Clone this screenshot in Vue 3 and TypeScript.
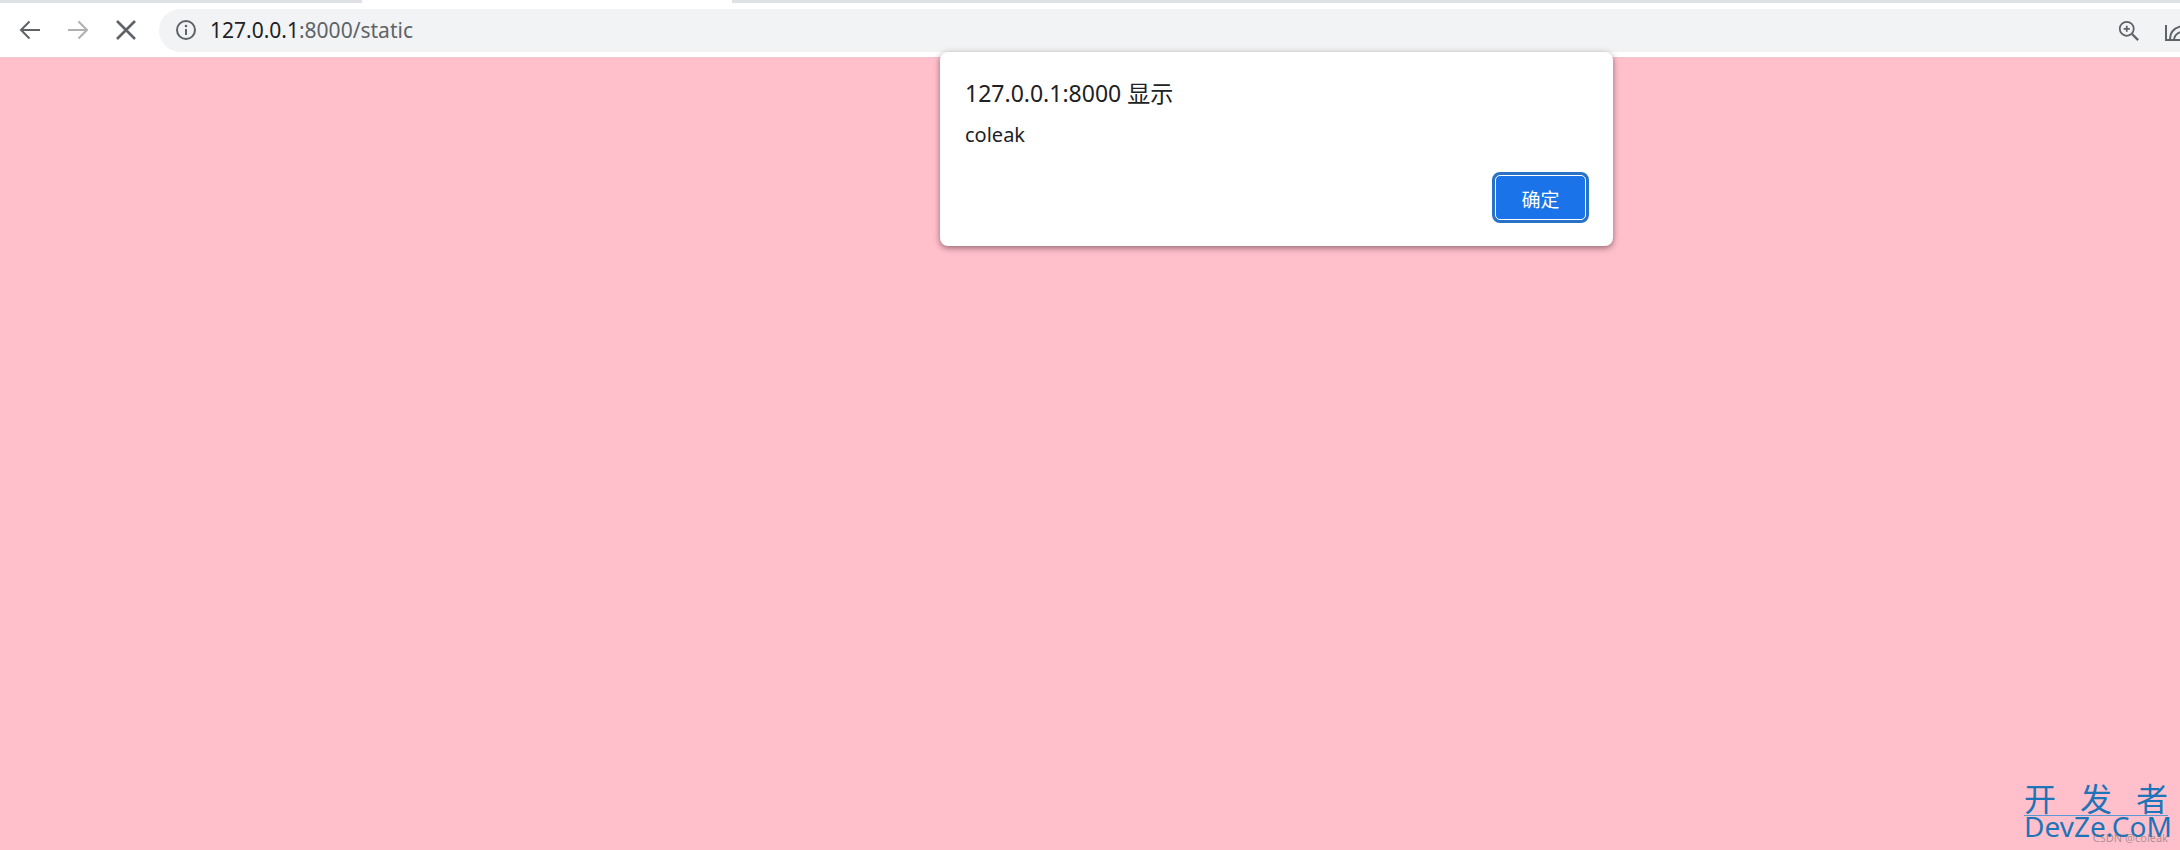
<template>
  <div class="page">
    <div class="tabstrip">
      <div class="tab-rest tab-left"></div>
      <div class="tab-active"></div>
      <div class="tab-rest tab-right"></div>
    </div>
    <header class="toolbar">
      <button class="nav-btn" aria-label="back">
        <svg width="24" height="24" viewBox="0 0 24 24"><path d="M22 12H3M11.5 3.5 3 12l8.5 8.5" class="stroke" /></svg>
      </button>
      <button class="nav-btn nav-off" aria-label="forward">
        <svg width="24" height="24" viewBox="0 0 24 24"><path d="M2 12h19M12.5 3.5 21 12l-8.5 8.5" class="stroke" /></svg>
      </button>
      <button class="nav-btn" aria-label="stop">
        <svg width="24" height="24" viewBox="0 0 24 24"><path d="M3 3l18 18M21 3 3 21" class="stroke thick" /></svg>
      </button>
      <div class="omnibox">
        <svg class="info" width="22" height="22" viewBox="0 0 22 22">
          <circle cx="11" cy="11" r="9" class="stroke" />
          <path d="M11 10v6" class="stroke" />
          <circle cx="11" cy="7" r="1.3" fill="#5f6368" />
        </svg>
        <span class="url"><span class="host">127.0.0.1</span>:8000/static</span>
        <div class="spacer"></div>
        <svg class="zoom-icon" width="21" height="21" viewBox="0 0 24 24">
          <circle cx="10" cy="10" r="8" class="stroke" />
          <path d="M16 16l7 7" class="stroke thick" />
          <path d="M10 6.5v7M6.5 10h7" class="stroke" />
        </svg>
        <svg class="perf-icon" width="24" height="24" viewBox="0 0 24 24">
          <path d="M1 5v15h22" class="stroke" />
          <path d="M5 19c0-9 7-13 18-14M9 19c1-5 6-8 14-8" class="stroke" />
        </svg>
      </div>
    </header>
    <main class="content"></main>

    <div class="dialog">
      <div class="dialog-title">127.0.0.1:8000 显示</div>
      <div class="dialog-msg">coleak</div>
      <div class="dialog-actions">
        <button class="ok-btn">确定</button>
      </div>
    </div>

    <div class="watermark">
      <div class="wm-cn"><span>开</span><span>发</span><span>者</span></div>
      <div class="wm-en">DevZe.CoM</div>
      <div class="wm-csdn">CSDN @coleak</div>
    </div>
  </div>
</template>

<script setup lang="ts">
</script>

<style>
html,
body {
  margin: 0;
  overflow: hidden;
}
</style>

<style scoped>
.page {
  position: relative;
  display: flex;
  flex-direction: column;
  width: 2180px;
  height: 850px;
  overflow: hidden;
  font-family: "Noto Sans", "Noto Sans CJK SC", sans-serif;
  background: #ffc0cb;
}

.tabstrip {
  display: flex;
  height: 3px;
  flex: none;
}

.tab-rest {
  background: #dee1e6;
}

.tab-left {
  width: 362px;
}

.tab-active {
  width: 370px;
  background: #fff;
}

.tab-right {
  flex: 1;
}

.toolbar {
  display: flex;
  align-items: center;
  height: 54px;
  flex: none;
  padding-left: 10px;
  background: #fff;
  box-sizing: border-box;
}

.nav-btn {
  display: flex;
  align-items: center;
  justify-content: center;
  width: 40px;
  height: 40px;
  margin-right: 8px;
  padding: 0;
  border: 0;
  background: none;
}

.nav-off {
  opacity: 0.5;
}

.stroke {
  fill: none;
  stroke: #5f6368;
  stroke-width: 2;
}

.thick {
  stroke-width: 2.6;
}

.omnibox {
  display: flex;
  align-items: center;
  flex: 1;
  height: 43px;
  margin-left: 5px;
  margin-right: -60px;
  padding-left: 16px;
  border-radius: 22px 0 0 22px;
  background: #f1f3f4;
}

.info {
  flex: none;
}

.url {
  margin-left: 13px;
  font-size: 21px;
  color: #5f6368;
}

.host {
  color: #202124;
}

.spacer {
  flex: 1;
}

.zoom-icon {
  flex: none;
  margin-right: 26px;
}

.perf-icon {
  flex: none;
  margin-top: 3px;
  margin-right: 51px;
}

.content {
  flex: 1;
  background: #ffc0cb;
  border-top: 1px solid #f0c4cc;
}

.dialog {
  position: absolute;
  top: 52px;
  left: 940px;
  width: 673px;
  height: 194px;
  box-sizing: border-box;
  padding: 26px 24px 0 25px;
  border-radius: 8px;
  background: #fff;
  box-shadow: 0 2px 6px rgba(60, 30, 40, 0.55);
  color: #202124;
}

.dialog-title {
  font-size: 23px;
  line-height: 30px;
}

.dialog-msg {
  margin-top: 13px;
  font-size: 20px;
  line-height: 27px;
}

.dialog-actions {
  display: flex;
  justify-content: flex-end;
  margin-top: 24px;
}

.ok-btn {
  width: 97px;
  height: 51px;
  padding: 2px 0 0;
  border: 3px solid #2a72c8;
  border-radius: 8px;
  outline: 1px solid #fff;
  outline-offset: -4px;
  background: #1a73e8;
  color: #fff;
  font-family: inherit;
  font-size: 19px;
}

.watermark {
  position: absolute;
  right: 12px;
  bottom: 14px;
  width: 144px;
  color: #1e74b8;
}

.wm-cn {
  display: flex;
  justify-content: space-between;
  height: 30px;
  border-bottom: 1px solid #5a9ad4;
  font-size: 32px;
  line-height: 28px;
}

.wm-en {
  position: relative;
  font-size: 28px;
  line-height: 20px;
  white-space: nowrap;
}

.wm-csdn {
  position: absolute;
  right: 0;
  bottom: -8px;
  font-size: 11px;
  line-height: 12px;
  color: rgba(110, 110, 110, 0.6);
  white-space: nowrap;
}
</style>
